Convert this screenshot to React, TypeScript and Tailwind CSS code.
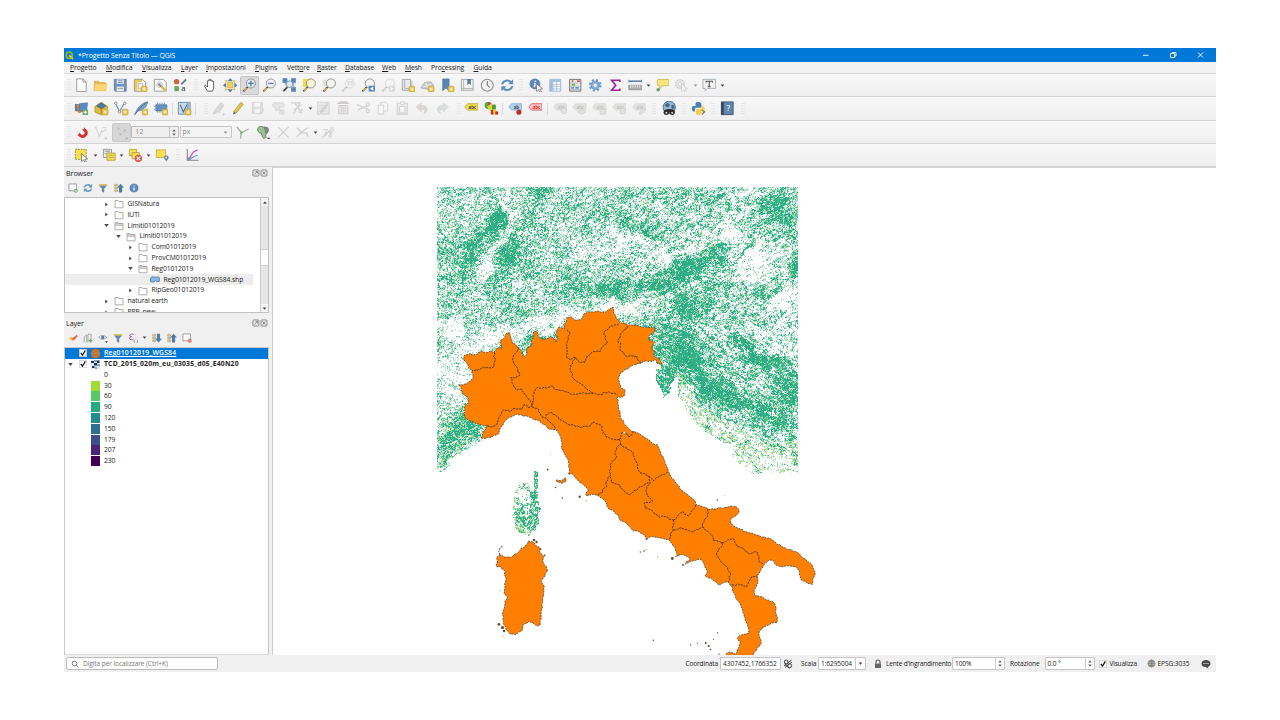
import React, { useMemo } from "react";

type Pt = [number, number];
type Kids = { children?: React.ReactNode };

/* ---------- noise helpers ---------- */

function hash(x: number, y: number, s: number): number {
  let h = (Math.imul(x, 374761393) + Math.imul(y, 668265263) + Math.imul(s, 1442695041)) | 0;
  h = Math.imul(h ^ (h >>> 13), 1274126177);
  h = Math.imul(h ^ (h >>> 16), 2246822519);
  return ((h ^ (h >>> 15)) >>> 0) / 4294967296;
}

function noise(x: number, y: number, s: number): number {
  const xi = Math.floor(x);
  const yi = Math.floor(y);
  const fx = x - xi;
  const fy = y - yi;
  const u = fx * fx * (3 - 2 * fx);
  const v = fy * fy * (3 - 2 * fy);
  const a = hash(xi, yi, s) * (1 - u) + hash(xi + 1, yi, s) * u;
  const b = hash(xi, yi + 1, s) * (1 - u) + hash(xi + 1, yi + 1, s) * u;
  return a * (1 - v) + b * v;
}

function inside(poly: Pt[], x: number, y: number): boolean {
  let r = false;
  for (let i = 0, j = poly.length - 1; i < poly.length; j = i++) {
    const [xi, yi] = poly[i];
    const [xj, yj] = poly[j];
    if (yi > y !== yj > y && x < ((xj - xi) * (y - yi)) / (yj - yi) + xi) r = !r;
  }
  return r;
}

/* ---------- vector geometry, in thirds of a map unit from a local origin ---------- */

function pts(ox: number, oy: number, s: string): Pt[] {
  return s.trim().split(/\s+/).map((p) => {
    const [x, y] = p.split(",").map(Number);
    return [ox + x / 3, oy + y / 3] as Pt;
  });
}

function rough(p: Pt[], closed: boolean): string {
  let d = `M${p[0][0].toFixed(1)} ${p[0][1].toFixed(1)}`;
  const n = closed ? p.length : p.length - 1;
  const amp = closed ? 1.5 : 2;
  for (let i = 0; i < n; i++) {
    const a = p[i];
    const b = p[(i + 1) % p.length];
    const len = Math.hypot(b[0] - a[0], b[1] - a[1]);
    const steps = Math.max(1, Math.round(len / 2.1));
    for (let k = 1; k <= steps; k++) {
      const t = k / steps;
      const j = k === steps ? 0 : amp;
      const x = a[0] + (b[0] - a[0]) * t + (hash(i, k, 5) - 0.5) * j;
      const y = a[1] + (b[1] - a[1]) * t + (hash(i, k, 6) - 0.5) * j;
      d += `L${x.toFixed(1)} ${y.toFixed(1)}`;
    }
  }
  return closed ? d + "Z" : d;
}

const N = (s: string) => pts(450, 300, s);
const S = (s: string) => pts(620, 420, s);
const W = (s: string) => pts(480, 460, s);

const mainland: Pt[] = [
  ...N("93,414 97,402 106,389 112,377 95,375 78,372 60,362 45,352 41,340 46,325 42,322 55,308 56,292 45,287 36,280 33,262 25,254 45,252 60,245 70,236 66,212 56,205 50,188 41,180 42,168 62,160 66,166 80,163 95,154 108,158 120,153 133,157 140,146 155,144 152,120 160,116 172,98 180,99 182,112 186,128 200,138 208,146 214,152 217,166 227,172 231,160 230,148 245,137 244,122 250,110 251,96 262,95 264,108 276,118 290,117 303,111 313,118 319,126 322,115 316,104 326,84 328,80 340,86 345,84 342,74 350,60 350,52 362,50 374,60 392,60 400,45 412,38 440,34 462,38 478,28 490,22 492,35 490,40 498,52 505,60 508,66 530,74 560,77 590,82 600,82 616,84 615,95 596,108 595,118 606,124 614,125 605,140 606,150 613,152 611,166 614,172 627,176 636,188 633,194 622,190 615,178 608,184 585,183 570,190 550,194 538,202 512,218 506,232 508,250 512,262 526,272 522,288 512,292 503,290 503,310 510,340 514,358 535,384 545,394 570,402 590,416 602,426 615,434 622,434 633,458 645,488 656,516 664,532 675,545"),
  ...S("180,206 200,222 222,240 228,254 258,262 264,268 290,266 320,262 345,258 356,268 355,280 338,292 331,300 338,316 360,327 385,338 415,346 445,354 468,368 490,382 515,390 533,398 545,410 565,425 578,440 585,455 582,470 578,478 577,493 560,488 544,480 541,470 538,450 525,440 510,438 490,440 465,433 462,424 447,420 432,434 420,455 412,470 413,490 402,510 406,528 425,530 440,540 462,548 467,560 466,575 472,600 470,608 455,609 435,620 418,632 416,642 420,655 424,668 412,682 395,712 345,712 350,698 358,680 362,665 352,655 365,645 385,640 386,626 375,600 372,590 368,570 360,550 346,532 335,498 325,486 318,486 298,495 280,480 255,468 262,455 255,442 245,420 240,418 210,424 196,432 210,418 205,410 190,402 172,408 170,398 160,378 145,358 125,355 110,352 90,350 78,360 72,345 58,335 42,334 20,312 0,300"),
  ...W("415,165 385,145 370,118 350,105 335,102 320,108 318,98 325,90 305,70 287,55 280,43 264,42 268,25 265,0"),
  ...N("348,470 335,445 333,415 328,402 316,388 300,388 290,380 270,365 240,352 215,345 200,342 178,352 160,370 148,392 145,402 120,412"),
];

const sardinia = W("145,243 155,245 165,252 178,262 180,278 190,290 188,302 203,332 190,352 183,362 193,380 188,420 184,450 180,495 172,498 160,490 145,485 130,492 126,512 108,524 90,522 78,508 70,490 68,458 75,430 83,410 74,402 74,385 78,355 72,330 62,320 50,320 52,290 60,285 75,292 92,292 112,280 135,258 143,250");

const borders: Pt[][] = [
  N("133,157 130,170 136,180 132,200 115,203 100,203 90,208 66,212"),
  N("204,142 200,155 190,170 190,185 200,200 203,215 210,225 195,235 182,233 190,255 200,270 215,268 230,290 243,305 245,320"),
  N("112,377 130,380 142,372 148,350 160,330 180,335 195,325 215,328 222,314 240,322 245,318"),
  N("245,316 250,300 252,275 262,262 290,264 305,258 312,266 345,275 365,284 400,278 430,280 450,283 475,275 503,285"),
  N("350,90 360,98 352,125 352,150 350,172 360,180 378,172 362,195 362,215 370,235 400,258 428,278"),
  N("378,175 390,188 405,187 412,168 430,155 450,155 455,142 472,130 465,115 462,95 480,80 495,74 508,70"),
  N("532,78 520,92 503,120 512,130 510,150 530,170 560,168 570,190"),
  N("245,320 262,325 272,345 290,355 310,375 316,388"),
  N("286,345 300,337 325,352 350,370 390,382 420,378 432,366 455,378 458,400 475,412 500,420 508,418"),
  N("508,418 515,398 530,400 540,410 550,395"),
  N("508,418 510,432 495,455 500,470 480,495 482,525 468,545 470,560 450,580 440,585"),
  N("510,432 525,443 550,458 562,500 570,518 595,528 600,545"),
  N("480,530 485,548 510,556 520,570 537,584 560,570 595,545"),
  N("595,528 612,542 620,532 656,516"),
  S("90,185 80,200 80,220 98,243 72,250 75,264 100,275 118,292 135,290 160,300"),
  S("160,300 175,285 190,275 205,288 218,270 228,254"),
  S("160,300 160,330 145,358"),
  S("160,330 180,324 215,335 248,322"),
  S("262,268 262,290 248,310 250,322 275,345 280,362 305,368"),
  S("305,368 305,380 290,398 300,420 315,435 332,460 325,486"),
  S("305,368 340,356 350,375 370,385 388,402 408,395 417,410 418,425 430,434"),
  S("335,494 360,495 380,500 390,480 395,470 412,470"),
];

const islets: [number, number, number][] = [
  [547.7, 469.5, 0.9], [555.5, 487.5, 0.8], [562.3, 498, 0.8], [579.7, 496.7, 1.2], [586.2, 500.7, 0.5],
  [550.3, 454, 0.4], [640.3, 552, 0.7], [644, 551, 0.8], [646, 549.5, 0.5], [657.7, 557, 0.5],
  [717.3, 500, 0.8], [724.3, 495.7, 0.4], [672.3, 558.5, 1.4], [676, 556.5, 0.7], [683, 565, 0.9],
  [653.3, 640.3, 0.8], [690.7, 645, 0.7], [697.5, 643.3, 0.6], [705.7, 643, 1], [708.7, 646, 1.1], [710.5, 649.5, 0.8],
  [713.5, 639.5, 0.6], [717.5, 633, 0.7], [719, 654, 0.7], [499, 624.3, 1.4], [502.5, 627.5, 1.6], [504, 631, 1.2],
  [534, 540, 1.3], [536.5, 542, 1.2], [540.5, 549, 0.9], [544.5, 555.5, 0.9], [500.5, 590.5, 0.4], [503, 635.5, 0.4],
];

/* ---------- forest-density raster ---------- */

const westSea = pts(430, 180, "15,875 50,862 55,850 80,820 110,805 140,785 158,772 240,640 600,640 600,1000 15,1000");
const adriatic = pts(610, 180, "0,560 130,540 157,560 135,568 142,610 162,648 176,636 184,605 198,588 205,640 225,690 262,735 330,782 365,800 372,840 400,868 440,882 470,870 500,876 565,884 565,1000 0,1000");
const channels = pts(610, 180, "190,585 205,580 235,600 250,625 265,670 300,700 370,730 440,770 500,820 565,860 565,890 380,890 360,790 270,745 215,690");

type Blob = [number, number, number, number, number, number];
const blobs: Blob[] = [
  [496, 221, 5, 15, 32, 0.75], [470, 258, 10, 20, 28, 0.5], [507, 199, 6, 22, 12, -0.4], [489, 262, 5, 24, 18, -0.35],
  [508, 252, 7, 22, 20, 0.5], [536, 199, 6, 16, 35, 0.4], [568, 236, 8, 5, 0, -0.2], [535, 290, 28, 5, 25, -0.25],
  [600, 288, 38, 6, -6, 0.35], [560, 320, 75, 8, -14, -0.45], [480, 345, 40, 10, -20, -0.28], [455, 330, 14, 8, 0, -0.45],
  [452, 372, 12, 10, 0, -0.45], [452, 394, 14, 9, 0, -0.45], [468, 375, 10, 18, 0, -0.3], [620, 310, 22, 7, 10, -0.4],
  [527, 340, 11, 12, 0, 0.4], [450, 440, 14, 22, 30, 0.3], [470, 428, 18, 8, -15, 0.25], [640, 228, 26, 7, 32, 0.4],
  [625, 237, 34, 6, 22, -0.35], [598, 250, 30, 12, 0, -0.12], [690, 266, 42, 8, -22, 0.5], [718, 258, 5, 10, 0, 0.4],
  [640, 289, 40, 7, -8, 0.24], [690, 306, 30, 13, -25, 0.32], [680, 250, 34, 4, -14, -0.3], [741, 200, 8, 16, 25, -0.35],
  [722, 233, 18, 6, -25, -0.4], [757, 258, 24, 22, 0, -0.48], [782, 300, 26, 15, -25, -0.42], [760, 215, 18, 6, -30, 0.1],
  [783, 218, 14, 18, 0, 0.35], [772, 200, 26, 8, -30, 0.25], [746, 246, 2, 12, 25, 0.8], [797, 265, 7, 10, 0, 0.5],
  [768, 290, 14, 5, -30, 0.45], [790, 350, 14, 18, 0, -0.3], [735, 330, 45, 6, 0, -0.1], [682, 348, 34, 17, 22, 0.4],
  [760, 358, 32, 7, 28, 0.55], [703, 385, 12, 30, -38, 0.4], [745, 404, 48, 11, 28, 0.42], [788, 392, 16, 20, 0, 0.4],
  [725, 352, 24, 10, 0, -0.1], [664, 382, 10, 16, 0, 0.3], [770, 385, 18, 6, 30, -0.12], [780, 450, 26, 12, 22, -0.05],
  [735, 335, 8, 30, -60, 0.15],
];

const inks = ["#2cae86", "#3ab583", "#5cc28d", "#8ed3b8", "#c3e8da", "#a3dc7c", "#239a86"];

function buildRaster(): string[] {
  const out = inks.map(() => "");
  const put = (i: number, x: number, y: number) => {
    out[i] += `M${x} ${y}h1`;
  };
  const field = blobs.map(([cx, cy, rx, ry, a, w]) => {
    const t = (a * Math.PI) / 180;
    return { cx, cy, rx, ry, w, c: Math.cos(t), s: Math.sin(t) };
  });
  for (let y = 187; y < 474; y++) {
    for (let x = 437; x < 798; x++) {
      const wx = x + (noise(x / 4, y / 4, 91) - 0.5) * 7;
      const wy = y + (noise(x / 4, y / 4, 92) - 0.5) * 7;
      if (inside(westSea, wx, wy)) continue;
      if (inside(adriatic, x + (wx - x) * 0.5, y + (wy - y) * 0.5)) continue;
      let d = 0.51;
      const bx = x + (noise(x / 9, y / 9, 11) - 0.5) * 14;
      const by = y + (noise(x / 9, y / 9, 12) - 0.5) * 14;
      for (const b of field) {
        const dx = bx - b.cx;
        const dy = by - b.cy;
        const u = (dx * b.c + dy * b.s) / b.rx;
        const v = (-dx * b.s + dy * b.c) / b.ry;
        const q = u * u + v * v;
        if (q < 5) d += b.w * Math.exp(-q);
      }
      const ang = x > 640 && y > 320 ? 0.6 : -0.55;
      const ru = x * Math.cos(ang) + y * Math.sin(ang);
      const rv = -x * Math.sin(ang) + y * Math.cos(ang);
      const calm = x > 640 ? 0.6 : 0.36;
      const streak = noise(ru / 5, rv / 1.8, 21) - 0.5;
      const patch = noise(x / 12, y / 12, 22) - 0.5;
      const fine = noise(x / 1.5, y / 1.5, 23) - 0.5;
      let sea = false;
      if (inside(channels, x, y)) {
        sea = true;
        d -= 0.2;
      }
      const p = d + streak * calm + patch * 0.22 + fine * 0.7 + (hash(x, y, 31) - 0.5) * 0.6;
      const k = hash(x, y, 41);
      const lime = sea || (y > 440 && x > 740) ? 0.35 : y > 400 && x < 480 ? 0.16 : 0.05;
      if (p > 0.8) put(k < lime * 0.4 ? 5 : k < 0.68 ? 0 : k < 0.92 ? 1 : 6, x, y);
      else if (p > 0.63) put(k < lime ? 5 : k < 0.22 ? 1 : k < 0.55 ? 2 : 3, x, y);
      else if (p > 0.38) put(k < lime ? 5 : k < 0.36 ? 3 : 4, x, y);
    }
  }
  for (let y = 471; y < 537; y++) {
    for (let x = 509; x < 542; x++) {
      const cx = 525.5 + (y - 510) * 0.02;
      const body = ((x - cx) / 13.5) ** 2 + ((y - 509) / 26) ** 2;
      const cape = x > 533 && x < 538 && y < 498;
      if (body > 1 + (noise(x / 3, y / 3, 51) - 0.5) * 0.5 && !cape) continue;
      const low = ((x - 522) / 8) ** 2 + ((y - 496) / 7) ** 2 < 1 ? -0.22 : 0;
      const east = x > 529 ? 0.15 : y > 506 ? 0.1 : -0.02;
      const p = 0.55 + low + east + (noise(x / 2.2, y / 2.2, 52) - 0.5) * 0.8 + (hash(x, y, 53) - 0.5) * 0.6;
      const k = hash(x, y, 54);
      const edge = body > 0.65 && x < 532 ? 0.5 : 0.12;
      if (p > 0.72) put(k < edge ? 5 : k < 0.75 ? 0 : 2, x, y);
      else if (p > 0.46) put(k < edge ? 5 : k < 0.5 ? 2 : 4, x, y);
    }
  }
  return out;
}

function MapCanvas() {
  const raster = useMemo(buildRaster, []);
  const land = useMemo(() => rough(mainland, true), []);
  const isle = useMemo(() => rough(sardinia, true), []);
  const lines = useMemo(() => borders.map((b) => rough(b, false)), []);
  return (
    <svg className="block h-[487px] w-[943px]" viewBox="273 168 943 487">
      <g shapeRendering="crispEdges" fill="none" transform="translate(0 .5)">
        {raster.map((d, i) => (
          <path key={i} d={d} stroke={inks[i]} strokeWidth="1" />
        ))}
      </g>
      <g fill="#ff8000" stroke="#4d463e" strokeWidth=".85" strokeDasharray="2 .9">
        <path d={land} />
        <path d={isle} />
        <path d="M556 480l5.500.7 4-3 .5 3.500-4 2-5-1.500zM726 654l3-2 4 1 2 1v3h-10z" />
        <path d="M500 555l-1.300-3.500 1.700-4 2.300-1.500" fill="none" strokeWidth="1" />
      </g>
      <g fill="none" stroke="#3f3524" strokeWidth=".95" strokeDasharray="2.300 .9">
        {lines.map((d, i) => (
          <path key={i} d={d} />
        ))}
      </g>
      <g fill="#6b4a2c">
        {islets.map(([x, y, r], i) => (
          <circle key={i} cx={x} cy={y} r={r} />
        ))}
      </g>
      <circle cx="624.300" cy="432.500" r="1.300" fill="#d8f0ea" stroke="#555" strokeWidth=".4" />
    </svg>
  );
}

/* ---------- icon building blocks ---------- */

function Ic({ children, faded, small }: Kids & { faded?: boolean; small?: boolean }) {
  return (
    <svg
      viewBox="0 0 16 16"
      className={(small ? "h-[10px] w-[10px]" : "h-[14.500px] w-[14.500px]") + " block shrink-0" + (faded ? " opacity-[.27] grayscale-[.6]" : " opacity-90")}
      fill="none"
    >
      {children}
    </svg>
  );
}

const Slot = ({ children }: Kids) => <div className="flex w-[19.8px] shrink-0 items-center justify-center">{children}</div>;

const Grip = () => (
  <svg viewBox="0 0 4 14" className="h-[14px] w-[4px] shrink-0" fill="#dadada">
    {[1, 3.5, 6, 8.5, 11].map((y) => (
      <path key={y} d={`M.4 ${y}h1.100v1.100h-1.100zM2.500 ${y}h1.100v1.100h-1.100z`} />
    ))}
  </svg>
);

const Rule = () => <div className="h-[12px] w-px shrink-0 bg-[#d8d8d8]" />;

const Caret = ({ pale }: { pale?: boolean }) => (
  <svg viewBox="0 0 6 4" className="h-[3px] w-[5px] shrink-0" fill={pale ? "#999" : "#444"}>
    <path d="M.5.500h5l-2.500 3z" />
  </svg>
);

const Star = () => (
  <g>
    <rect x="9" y="9" width="6.500" height="6.500" rx="1.200" fill="#dcb83a" stroke="#b99a25" strokeWidth=".6" />
    <path d="M12.250 10v4.500M10 12.250h4.500M10.700 10.700l3.100 3.100M13.800 10.700l-3.100 3.100" stroke="#fff7c4" strokeWidth=".7" />
  </g>
);

const Plus = () => (
  <g>
    <rect x="9.500" y="9.500" width="6" height="6" rx="1" fill="#5f9b5c" />
    <path d="M12.500 10.500v4M10.500 12.500h4" stroke="#fff" strokeWidth="1.200" />
  </g>
);

const Lens = ({ fill = "#f6f6f4" }: { fill?: string }) => (
  <g>
    <path d="M6.400 9.800L1.500 14.700" stroke="#3b3b3b" strokeWidth="2" />
    <path d="M5.300 10.900l-3 3" stroke="#e4b640" strokeWidth="1.500" />
    <circle cx="9.800" cy="6" r="5" fill={fill} stroke="#7d8284" strokeWidth="1" />
  </g>
);

const TagShape = ({ fill, stroke, text }: { fill: string; stroke: string; text: string }) => (
  <g>
    <path d="M4 3h11.500v7h-11.500L.8 6.500z" fill={fill} stroke={stroke} strokeWidth=".9" />
    <text x="9.300" y="8.300" textAnchor="middle" fontFamily="Open Sans, sans-serif" fontWeight="700" fontSize="5" fill={stroke === "#e03a3a" ? "#d11" : "#333"}>
      {text}
    </text>
  </g>
);

const Folder = ({ open }: { open?: boolean }) => (
  <svg viewBox="0 0 10 10" className="h-[10px] w-[10px] shrink-0" fill="#fff" stroke="#9a9a9a" strokeWidth=".8">
    <path d="M1 8.800V1.500h3l.8 1H9v6.300z" />
    {open && <path d="M1 4.200h8M1.500 2.800h7" fill="none" />}
  </svg>
);

const Refresh = () => (
  <g stroke="#4a83bf" strokeWidth="2.300">
    <path d="M2.500 7A5.500 5 0 0 1 12 4.500" />
    <path d="M13.500 9A5.500 5 0 0 1 4 11.500" />
    <path d="M14.500 1.500v5.500H9zM1.500 14.500V9H7z" fill="#4a83bf" stroke="none" />
  </g>
);

const Funnel = () => (
  <g>
    <path d="M2 4h12L9.500 9v6l-3-1.500V9z" fill="#5a7fa8" stroke="#3d6087" strokeWidth=".6" />
    <path d="M1.500 1.500h13v2.500h-13z" fill="#e0bf45" />
  </g>
);

const Info = () => (
  <g>
    <circle cx="8" cy="8" r="6.500" fill="#4a82bd" stroke="#2f6299" strokeWidth=".8" />
    <path d="M8 7v5M8 3.800v1.700" stroke="#fff" strokeWidth="2" />
  </g>
);

const Pencil = ({ c = "#e8c42e" }: { c?: string }) => (
  <g>
    <path d="M3 11.500L11 1.500l2.500 2L5.500 13.500z" fill={c} stroke="#8a7521" strokeWidth=".7" />
    <path d="M3 11.500l2.500 2-3.300 1.500z" fill="#555" />
  </g>
);

const Arrow = () => <path d="M8 6l7 6-3 .2 1.700 3-1.500.7-1.600-3-2.100 2z" fill="#fff" stroke="#555" strokeWidth=".8" />;

/* ---------- toolbars ---------- */

const bar = "flex items-center shrink-0 border-b border-[#d3d3d3] bg-gradient-to-b from-[#f8f8f8] to-[#efefef]";

function ProjectBar() {
  return (
    <div className={bar + " h-[23px] pl-[3px]"}>
      <Grip />
      <Slot><Ic><path d="M3 1h7L13.500 4.500v10.500H3z" fill="#fff" stroke="#8c8c8c" /><path d="M10 1V4.500h3.500" stroke="#8c8c8c" /></Ic></Slot>
      <Slot><Ic><path d="M1 3h5l1.500 1.500H14V14H1z" fill="#e0b249" /><path d="M2.500 6.500H15.500L14 14H1z" fill="#fbd266" stroke="#e3b44d" strokeWidth=".6" /></Ic></Slot>
      <Slot><Ic><path d="M1.500 1.500h13v13h-12l-1-1z" fill="#5f8ab8" stroke="#4d6f96" /><path d="M4 1.500h8v5H4z" fill="#cfe0f0" /><path d="M4 9.500h8v5H4z" fill="#e8e8e8" /><path d="M5.500 3h5M5.500 5h5M5 11.500h6" stroke="#777" strokeWidth=".8" /></Ic></Slot>
      <Slot><Ic><path d="M1.500 1.500h9L14 5v9.500H1.500z" fill="#fff" stroke="#777" /><path d="M2 2h3v12H2zM2 2h8v2.500H2z" fill="#ecc544" /><path d="M6 6h5v6H6z" fill="#f5f5f5" stroke="#888" strokeWidth=".6" /><Star /></Ic></Slot>
      <Slot><Ic><path d="M1.500 1.500h10L14.500 5v9.500h-13z" fill="#fff" stroke="#888" /><path d="M3 8l4-5 4 4-4 4z" fill="#dfe7ee" stroke="#999" strokeWidth=".6" /><path d="M6 6.500l7.500 7" stroke="#777" strokeWidth="2.200" /><path d="M9 9.300l5 5" stroke="#e3c03a" strokeWidth="2.200" /></Ic></Slot>
      <Slot><Ic><circle cx="4" cy="4" r="3" fill="#c4552d" /><path d="M1.500 9h5v5.500h-5z" fill="#5d9b5a" /><path d="M9 7l5.500-5.500" stroke="#4c6f92" strokeWidth="2" /><text x="9" y="14.500" fontFamily="Open Sans, sans-serif" fontWeight="600" fontSize="8.500" fill="#444">a</text></Ic></Slot>
      <div className="flex w-[10.300px] shrink-0 justify-center pl-[2px]"><Grip /></div>
      <Slot><Ic><path d="M5 14.500L2 9.500c-.8-1.500.8-2 1.500-1L5 10V3.500c0-1.300 1.600-1.300 1.600 0V2.200c0-1.300 1.700-1.300 1.700 0v.8c0-1.200 1.700-1.200 1.700 0v1.200c0-1.200 1.700-1.200 1.700 0V11l-1.200 3.500z" fill="#fff" stroke="#333" strokeWidth=".9" /></Ic></Slot>
      <Slot><Ic><path d="M5 5h6v6H5z" fill="#f2cf3d" stroke="#b9971c" strokeWidth=".6" /><path d="M8 0l3 3.500H5zM8 16l3-3.500H5zM0 8l3.500-3v6zM16 8l-3.500-3v6z" fill="#4470a3" /><path d="M2 2l3.500 1L3 5.500zM14 2l-3.500 1L13 5.500zM2 14l1-3.500L5.500 13zM14 14l-1-3.500-2.500 2.500z" fill="#e6c233" /></Ic></Slot>
      <Slot>
        <div className="flex h-[19px] w-[19px] shrink-0 items-center justify-center rounded-[2px] border border-[#c3c3c3] bg-[#dadada]">
          <Ic><Lens fill="#e6edf4" /><path d="M9.800 3v6M6.800 6h6" stroke="#3f6da3" strokeWidth="1.500" /></Ic>
        </div>
      </Slot>
      <Slot><Ic><Lens /><path d="M7 6h5.600" stroke="#3f6da3" strokeWidth="1.500" /></Ic></Slot>
      <Slot><Ic><path d="M1 .500h4.500v4.500H1zM10.500.500H15v4.500h-4.500zM10.500 10.500H15V15h-4.500zM3 5l2 4M13 5v6" fill="#4a7ab0" stroke="#4a7ab0" strokeWidth=".8" /><path d="M6 10l-4.500 4.500" stroke="#333" strokeWidth="2" /><circle cx="8.300" cy="6.800" r="3.600" fill="#dfe9f2" stroke="#6d8296" /></Ic></Slot>
      <Slot><Ic><path d="M1 1h7v9H1z" fill="#f2dc3c" /><Lens fill="#f8f4cf" /></Ic></Slot>
      <Slot><Ic><path d="M1 2h7v7H1z" fill="#ddd" /><Lens fill="#f2f2ee" /></Ic></Slot>
      <Slot><Ic faded><Lens /><text x="9.800" y="8" textAnchor="middle" fontFamily="Open Sans, sans-serif" fontWeight="700" fontSize="5" fill="#333">1:1</text></Ic></Slot>
      <Slot><Ic><Lens /><path d="M8.500 8.500h7v6.500h-7z" fill="#4a7fb8" /><path d="M13.500 9.500v4.500L10 11.750z" fill="#fff" /></Ic></Slot>
      <Slot><Ic faded><Lens /><path d="M8.500 8.500h7v6.500h-7z" fill="#999" /><path d="M10.500 9.500v4.500l3.500-2.250z" fill="#fff" /></Ic></Slot>
      <Slot><Ic><path d="M1.500 1.500h9v12h-9z" fill="#e9e9e9" stroke="#999" /><path d="M4 1.500v10h8V3" stroke="#aaa" /><Star /></Ic></Slot>
      <Slot><Ic><path d="M1 11l4-6 7-1 3 4-3 5z" fill="#c9c9c9" stroke="#999" strokeWidth=".8" /><path d="M3 10l9-3M6 5l4 7" stroke="#f4f4f4" strokeWidth=".8" /><Star /></Ic></Slot>
      <Slot><Ic><path d="M3 1h7v13l-3.500-3L3 14z" fill="#4a7ab0" stroke="#34618f" strokeWidth=".7" /><Star /></Ic></Slot>
      <Slot><Ic><path d="M1.500 1.500h13v12h-13z" fill="#f4f4f4" stroke="#999" /><path d="M4 1.500v12M1.500 11.500h13" stroke="#aaa" /><path d="M8 1h4v7l-2-2-2 2z" fill="#4a6f98" /></Ic></Slot>
      <Slot><Ic><circle cx="8" cy="8" r="6.600" fill="#f5f5f5" stroke="#868686" strokeWidth="1.200" /><path d="M8 3.500V8l3 2.500" stroke="#555" strokeWidth="1.100" /></Ic></Slot>
      <Slot><Ic><Refresh /></Ic></Slot>
      <div className="flex w-[9.200px] shrink-0 justify-center"><Grip /></div>
      <Slot><Ic><circle cx="6.500" cy="6.500" r="5.500" fill="#4a82bd" stroke="#2f6299" strokeWidth=".7" /><path d="M6.800 5.500L6 10M7.200 2.800l-.2 1.500" stroke="#fff" strokeWidth="1.700" /><Arrow /></Ic></Slot>
      <Slot><Ic><path d="M2 1.500h12v13H2z" fill="#fff" stroke="#8aa9ca" /><path d="M2 1.500h12v3H2zM2 4.500h3v10H2z" fill="#9dbcdb" /><path d="M2 7h12M2 9.500h12M2 12h12M5.500 4v10M9.500 4v10" stroke="#8aa9ca" strokeWidth=".8" /></Ic></Slot>
      <Slot><Ic><path d="M1.800 1.500h12.400v13H1.800z" fill="#f3f3f3" stroke="#666" strokeWidth="1.100" /><path d="M2 5.500h12M2 9h12M2 12.500h12" stroke="#777" strokeWidth=".6" /><path d="M4 3.500h2M10 3.500h3" stroke="#c94a4a" strokeWidth="2" /><path d="M4 7.300h4" stroke="#5aa55a" strokeWidth="2" /><path d="M3.500 11h3M8 11h4" stroke="#5a8cc0" strokeWidth="1.900" /></Ic></Slot>
      <Slot><Ic><circle cx="8" cy="8" r="4.500" fill="#7ea9d6" stroke="#4f82ba" /><circle cx="8" cy="8" r="5.700" stroke="#5f90c6" strokeWidth="2.600" strokeDasharray="2.300 2.200" /><circle cx="8" cy="8" r="1.800" fill="#e8f0f8" /></Ic></Slot>
      <Slot><Ic><path d="M13 4.500V2.500H4l4.500 5.500L4 13.500h9v-2" stroke="#940a94" strokeWidth="1.800" /></Ic></Slot>
      <Slot><Ic><path d="M1 3.500h14" stroke="#3d6b9c" strokeWidth="1.600" /><path d="M1 2v3M15 2v3" stroke="#3d6b9c" /><path d="M.8 8h14.400v5H.8z" fill="#a5a5a5" stroke="#777" strokeWidth=".7" /><path d="M3 8v2.500M5.500 8v2.500M8 8v2.500M10.500 8v2.500M13 8v2.500" stroke="#fff" strokeWidth=".9" /></Ic></Slot>
      <div className="flex w-[7.100px] shrink-0 justify-center"><Caret /></div>
      <Slot><Ic><path d="M4 1.500h10c1 0 1.500.5 1.500 1.500v4c0 1-.5 1.500-1.500 1.500H8L4.500 13l.5-4.500H4c-1 0-1.500-.5-1.500-1.500V3c0-1 .5-1.500 1.500-1.500z" fill="#f7e56f" stroke="#b9a63a" strokeWidth=".8" /><circle cx="3.500" cy="13" r="2" fill="#5d9b5a" /></Ic></Slot>
      <Slot><Ic faded><circle cx="6.500" cy="6.500" r="4.700" fill="#bbb" stroke="#777" strokeWidth="1.500" strokeDasharray="2 1" /><circle cx="6.500" cy="6.500" r="2" fill="#fff" stroke="#888" /><Arrow /></Ic></Slot>
      <div className="flex w-[7.500px] shrink-0 justify-center"><Caret pale /></div>
      <Slot><Ic><path d="M1 1.500h14v10H6L3.500 14v-2.500H1z" fill="#f1f1f1" stroke="#9ca5ad" /><path d="M4.500 5V3.500h7V5M8 3.500v6M6.500 9.500h3" stroke="#444" strokeWidth="1.200" /></Ic></Slot>
      <div className="flex w-[7px] shrink-0 justify-center"><Caret /></div>
    </div>
  );
}

function EditBar() {
  return (
    <div className={bar + " h-[24px] pl-[3px]"}>
      <Grip />
      <div className="w-[.8px] shrink-0" />
      <Slot><Ic><path d="M1 3l7 1-1 8-6-1z" fill="#4f6f9a" /><path d="M2.500 4.500l8-2 1 9-6.500 2z" fill="#c3793e" /><path d="M6 3l9-1-1 8-8 1z" fill="#4a80bb" stroke="#2f5f92" strokeWidth=".6" /><Plus /></Ic></Slot>
      <Slot><Ic><path d="M1 6l7-4.500L15 6v6l-7 3.500L1 12z" fill="#e0b629" stroke="#94760f" strokeWidth=".7" /><path d="M3 5.500l5-3.500 5 3.500-5 3z" fill="#3d6fa6" stroke="#29496b" strokeWidth=".8" /><path d="M8 8.500v6" stroke="#94760f" /><Star /></Ic></Slot>
      <Slot><Ic><path d="M2 3l4 9L11 3" stroke="#5a7fa8" strokeWidth="1.200" /><circle cx="2" cy="2.500" r="1.300" fill="#fff" stroke="#666" strokeWidth=".8" /><circle cx="6" cy="12" r="1.400" fill="#fff" stroke="#666" strokeWidth=".8" /><circle cx="12" cy="2.500" r="1.300" fill="#fff" stroke="#666" strokeWidth=".8" /><Star /></Ic></Slot>
      <Slot><Ic><path d="M1 15C3 8 8 2 15 1c-1 6-6 10-11 10z" fill="#6b9bcc" stroke="#4d7096" strokeWidth=".8" /><path d="M1 15C5 9 9 5 15 1" stroke="#2e4d6e" strokeWidth=".8" /><Star /></Ic></Slot>
      <Slot><Ic><path d="M2 4h12v7H2z" fill="#5587bd" stroke="#345f8f" strokeWidth=".7" /><path d="M4 2v2M6.500 2v2M9 2v2M11.500 2v2M4 11v2M6.500 11v2" stroke="#7f9dbd" strokeWidth="1.200" /><path d="M0 6h2M0 9h2M14 6h2" stroke="#7f9dbd" /><Star /></Ic></Slot>
      <div className="flex w-[4px] shrink-0 justify-center"><Rule /></div>
      <Slot><Ic><path d="M1.500 1.500h13v13h-13z" fill="#c6d8ea" stroke="#5c7d9e" /><path d="M3.500 4l3.500 8 4-8" stroke="#3a5878" strokeWidth="1.200" /><path d="M12 2v8" stroke="#7f9fc0" strokeWidth="2" /><Star /></Ic></Slot>
      <div className="flex w-[2px] shrink-0 justify-center"><Rule /></div>
      <div className="flex w-[11px] shrink-0 justify-end"><Grip /></div>
      <div className="w-[1px] shrink-0" />
      <Slot><Ic faded><Pencil c="#999" /><path d="M8 13l6-9" stroke="#888" strokeWidth="2.200" /><path d="M12.500 14h3l-1.500 2z" fill="#333" /></Ic></Slot>
      <Slot><Ic><Pencil /></Ic></Slot>
      <Slot><Ic faded><path d="M1.500 1.500h11v12h-11z" fill="#aaa" stroke="#777" /><path d="M4 2h6v4H4zM4 9h6v4H4z" fill="#fff" /><path d="M8 15l5-7 2 1.500-5 6z" fill="#999" /></Ic></Slot>
      <Slot><Ic faded><path d="M4 2h8c4 0 4 5 0 5H9v3H5V7H4C1 7 1 2 4 2z" fill="#bbb" stroke="#888" /><rect x="9" y="9" width="6" height="6" fill="#aaa" /></Ic></Slot>
      <Slot><Ic faded><path d="M1 2h10L4 14M5 2l8 11M13 4l-9 6" stroke="#777" strokeWidth="1.300" /><path d="M9 12l4-4 2 2-4 4z" fill="#999" /></Ic></Slot>
      <div className="flex w-[6px] shrink-0 justify-center"><Caret /></div>
      <Slot><Ic faded><path d="M1.500 1.500h13v13h-13z" fill="#ccc" stroke="#777" /><path d="M3 5h9M3 8h9M3 11h7" stroke="#888" /><path d="M5 13L13 3" stroke="#666" strokeWidth="2" /></Ic></Slot>
      <Slot><Ic faded><path d="M1.500 2.500h13M4 1h8" stroke="#855" strokeWidth="1.600" /><path d="M3 5h10v9H3z" fill="#dcc" stroke="#866" strokeWidth="1.200" /><path d="M6 6v7M8 6v7M10 6v7" stroke="#866" /></Ic></Slot>
      <Slot><Ic faded><path d="M1 4l12 5M2 10l12-5" stroke="#777" strokeWidth="1.600" /><circle cx="13" cy="3.500" r="1.800" stroke="#777" strokeWidth="1.200" /><circle cx="13" cy="11" r="1.800" stroke="#777" strokeWidth="1.200" /></Ic></Slot>
      <Slot><Ic faded><path d="M5 1.500h6l2 2V11H5z" fill="#fff" stroke="#777" /><path d="M2.500 4.500h6v10h-6z" fill="#fff" stroke="#777" /></Ic></Slot>
      <Slot><Ic faded><path d="M2.500 2.500h11v12h-11z" fill="#ddd" stroke="#777" strokeWidth="1.300" /><path d="M5 6h6v7H5zM6 1h4v3H6z" fill="#fff" stroke="#777" /></Ic></Slot>
      <Slot><Ic faded><path d="M1 6.500L7 2v3c5 0 7 2 6.500 5-.3 2-2 3.500-4 4 2-2.500 1.500-5-2.500-5V12z" fill="#b77" stroke="#866" strokeWidth=".5" /></Ic></Slot>
      <Slot><Ic faded><path d="M15 6.500L9 2v3C4 5 2 7 2.500 10c.3 2 2 3.500 4 4-2-2.500-1.500-5 2.500-5v3z" fill="#8a8" stroke="#676" strokeWidth=".5" /></Ic></Slot>
      <div className="flex w-[9px] shrink-0 justify-center pl-[4px]"><Grip /></div>
      <Slot><Ic><TagShape fill="#f4dc3a" stroke="#b39c20" text="abc" /></Ic></Slot>
      <Slot><Ic><circle cx="4.500" cy="5" r="3.800" fill="#2fa32f" /><path d="M4.500 1.200v4l4-1a4 4 0 0 0-4-3z" fill="#d22" /><path d="M3 6l4 5 4-5-3-3z" fill="#e6c820" /><path d="M9 4h4v6H9z" fill="#2f8f2f" /><path d="M7.500 10h3v5h-3z" fill="#c11" /><path d="M10.500 9h3v6h-3z" fill="#f0d020" /><path d="M12.500 11.500H16V15h-3.500z" fill="#c11" /></Ic></Slot>
      <div className="flex w-[4px] shrink-0 justify-center"><Rule /></div>
      <div className="w-[.6px] shrink-0" />
      <Slot><Ic><TagShape fill="#a9c9ea" stroke="#7fa5cc" text="ab" /><circle cx="12" cy="12.300" r="2.800" fill="#b11f1f" /></Ic></Slot>
      <Slot><Ic><TagShape fill="#fbc4c4" stroke="#e03a3a" text="abc" /></Ic></Slot>
      <div className="flex w-[5px] shrink-0 justify-center"><Rule /></div>
      {["M9 11a3 3 0 1 0 6 0a3 3 0 1 0-6 0", "M6 12q4.500-4 9 0q-4.500 4-9 0", "M9 9h6v5.500H9z", "M9 14v-3a3 3 0 0 1 6 0v3z", "M8 14.500l1-3L13 8l2 2-4 4z"].map((d) => (
        <Slot key={d}><Ic faded><TagShape fill="#b5b5a5" stroke="#8b8b7d" text="abc" /><path d={d} fill="#bbb" stroke="#666" strokeWidth=".8" /></Ic></Slot>
      ))}
      <div className="flex w-[10px] shrink-0 justify-center"><Grip /></div>
      <Slot><Ic><circle cx="8" cy="7" r="6.800" fill="#8caed0" stroke="#2f4963" strokeWidth=".9" /><path d="M3 4l3-2 3 2-2 3-3-1zM10 5l3-1 1 4-3 1z" fill="#35577c" /><circle cx="4.800" cy="12.500" r="3" fill="#111" /><circle cx="11.200" cy="12.500" r="3" fill="#111" /><path d="M5.500 9h5v3h-5z" fill="#111" /><circle cx="4.800" cy="13" r="1.100" fill="#ddd" /><circle cx="11.200" cy="13" r="1.100" fill="#ddd" /></Ic></Slot>
      <div className="flex w-[10px] shrink-0 justify-center"><Grip /></div>
      <Slot><Ic><path d="M8 1C5 1 5 2.500 5 4v1.500h4H3C1 5.500 1 7 1 8.500S2 11.500 3 11.500h1.500V9c0-1 .5-1.500 1.500-1.500h4c1 0 1.500-.5 1.500-1.500V4C11.500 2 10.500 1 8 1z" fill="#3a73a8" /><path d="M8 15.500c3 0 3.500-1 3.500-3V11h-4H13c2 0 2-1.500 2-2.500S14.500 5.500 13 5.500h-1V7c0 1.500-1 1.800-2 1.800H7c-1 0-1.500.7-1.500 1.700v2c0 2 .5 3 2.500 3z" fill="#f2ca3a" /><path d="M12 10l3 2-3 3" stroke="#776633" strokeWidth="1.300" /></Ic></Slot>
      <div className="flex w-[9px] shrink-0 justify-center"><Grip /></div>
      <Slot><Ic><path d="M1.500 1h13v14h-13z" fill="#4f7cae" stroke="#27435f" /><path d="M1.500 1H4v14H1.500z" fill="#22303e" /><text x="9.300" y="11.500" textAnchor="middle" fontFamily="Open Sans, sans-serif" fontWeight="600" fontSize="9.500" fill="#dfeaf5">?</text></Ic></Slot>
      <div className="flex w-[12px] shrink-0 justify-center"><Grip /></div>
    </div>
  );
}

const Steps = () => (
  <svg viewBox="0 0 6 10" className="h-[9px] w-[6px] shrink-0" fill="#666"><path d="M1 4l2-2.500L5 4zM1 6l2 2.500L5 6z" /></svg>
);

function SnapBar() {
  return (
    <div className={bar + " h-[23px] pl-[3px]"}>
      <Grip />
      <div className="w-[1px] shrink-0" />
      <Slot><Ic><path d="M9 3.500l2.800 3.300c2.200 3.200-2.500 7.400-5.500 5.200L3.200 9.300" stroke="#d11c1c" strokeWidth="3.300" /><path d="M8 4.300l1.900-1.700M2.200 10.500l1.900-2.300" stroke="#eee" strokeWidth="2.200" /></Ic></Slot>
      <Slot><Ic faded><path d="M2 3l4 9 3-6M9 3h5M8 8l6-3" stroke="#777" strokeWidth="1.300" /><circle cx="2" cy="3" r="1.500" fill="#999" /><circle cx="6" cy="12" r="1.500" fill="#999" /><path d="M11 14h4l-2 2z" fill="#333" /></Ic></Slot>
      <div className="flex h-[19px] w-[19px] shrink-0 items-center justify-center rounded-[2px] border border-[#cacaca] bg-[#d6d6d6]">
        <Ic faded><path d="M4 3h2v2H4zM11 5h2v2h-2zM6 9h2v2H6z" fill="#666" /><path d="M12 14h4l-2 2z" fill="#222" /></Ic>
      </div>
      <div className="flex h-[12px] w-[48px] shrink-0 items-center justify-between rounded-[1px] border border-[#bdbdbd] bg-[#efefef] pl-[4px] text-[#888]">
        <span className="pt-px">12</span>
        <div className="flex h-full w-[9px] items-center justify-center border-l border-[#c4c4c4]"><Steps /></div>
      </div>
      <div className="ml-[1px] flex h-[12px] w-[52px] shrink-0 items-center justify-between rounded-[1px] border border-[#c6c6c6] bg-[#f4f4f4] pr-[3px] pl-[2px] text-[#888]">
        px<Caret pale />
      </div>
      <div className="w-[1px]" />
      <Slot><Ic><path d="M2 2l5 6.500 8-4M7 8.500L6 15" stroke="#8fa98f" strokeWidth="1.300" /><circle cx="7" cy="8.500" r="1.500" fill="#6fae6f" /></Ic></Slot>
      <div className="w-[.8px]" />
      <Slot><Ic><path d="M2 4c1-3 5-3 7-1l3 3c2 2 0 4-1.500 4.500l.5 3c-1 2-4 1-4-1L6 9C3 9 1.500 7 2 4z" fill="#8cc084" stroke="#5d6a5d" strokeWidth="1.100" /><path d="M9 2l4 1c2 2 0 6-2 6z" fill="#7b857b" stroke="#555" strokeWidth=".7" /><path d="M12 14h4l-2 2z" fill="#222" /></Ic></Slot>
      <Slot><Ic faded><path d="M2 2l12 12M14 2L2 14" stroke="#777" strokeWidth="1.300" /></Ic></Slot>
      <Slot><Ic faded><path d="M2 13l5-5 7-5M2 3l5 5 6 1 1 4" stroke="#777" strokeWidth="1.500" /><circle cx="7" cy="8" r="1.800" fill="#888" /></Ic></Slot>
      <div className="flex w-[6px] shrink-0 justify-center"><Caret /></div>
      <Slot><Ic faded><path d="M2 5h5l-4 8 7-7v6l4-8" stroke="#777" strokeWidth="1.300" /><path d="M10 2h4v4h-4zM1 12h3v2H1zM8 11h4v3H8z" fill="#aaa" /></Ic></Slot>
    </div>
  );
}

function SelectBar() {
  return (
    <div className={bar + " h-[23px] pl-[3px]"}>
      <Grip />
      <div className="w-[.8px] shrink-0" />
      <Slot><Ic><path d="M1.500 1.500h12v11h-12z" fill="#f7df3e" stroke="#8a7d26" strokeDasharray="2 1" /><Arrow /></Ic></Slot>
      <div className="flex w-[7.500px] shrink-0 justify-center"><Caret /></div>
      <Slot><Ic><path d="M1.500 1.500h9v9h-9z" fill="#e9e9e9" stroke="#888" /><path d="M5.500 5.500h9v8h-9z" fill="#f7df3e" stroke="#a8983a" /><path d="M3 3.500h6M3 6h2" stroke="#777" strokeWidth=".9" /><path d="M7 8h6M7 10.500h6" stroke="#a8983a" strokeWidth=".8" /></Ic></Slot>
      <div className="flex w-[6px] shrink-0 justify-center"><Caret /></div>
      <Slot><Ic><path d="M1.500 1.500h8v7h-8z" fill="#f7df3e" stroke="#a08c1c" strokeWidth=".8" /><path d="M4.500 5h8v7h-8z" fill="#f7df3e" stroke="#a08c1c" strokeWidth=".8" /><circle cx="11.500" cy="11.500" r="4" fill="#d9443c" /><path d="M9.500 9.500l4 4M13.500 9.500l-4 4" stroke="#fff" strokeWidth="1.200" /></Ic></Slot>
      <div className="flex w-[7.500px] shrink-0 justify-center"><Caret /></div>
      <Slot><Ic><path d="M1.500 2h10v8.500h-10z" fill="#f7df3e" stroke="#b49d23" strokeWidth=".8" /><path d="M12.500 15l-2.200-3.500a2.400 2.400 0 1 1 4.400 0z" fill="#4d7cab" /><circle cx="12.500" cy="10.600" r="1" fill="#fff" /></Ic></Slot>
      <div className="flex w-[10px] shrink-0 justify-center pl-[2px]"><Grip /></div>
      <Slot><Ic><path d="M2.500 1v12.500H15" stroke="#777" strokeWidth="1.200" /><path d="M3 12c4 0 4-7 7-8l4-2" stroke="#c445b5" strokeWidth="1.400" /><path d="M3 13c5-1 5-4 11-5" stroke="#5487bd" strokeWidth="1.300" /></Ic></Slot>
    </div>
  );
}

/* ---------- docks ---------- */

function DockTitle({ name }: { name: string }) {
  return (
    <div className="flex h-[12px] shrink-0 items-center justify-between pr-[1px] pl-[2px] text-[7.200px]">
      <span className="pt-[2px]">{name}</span>
      <svg viewBox="0 0 16 8" className="h-[8px] w-[16px]" fill="#e6e6e6" stroke="#777" strokeWidth=".8">
        <rect x=".9" y=".9" width="6" height="6.200" rx="1" />
        <rect x="9" y=".9" width="6" height="6.200" rx="1" />
        <path d="M2.500 5.500l2.800-3M3.500 2.300h2v2M10.500 2.500l3 3M13.500 2.500l-3 3" />
      </svg>
    </div>
  );
}

const Twist = ({ open }: { open?: boolean }) => (
  <svg viewBox="0 0 6 6" className="h-[5px] w-[5px] shrink-0" fill="#444">
    <path d={open ? "M.3 1.300h5.400L3 4.800z" : "M1.500.600v4.800l3-2.400z"} />
  </svg>
);

const tree: { pad: string; label: string; open?: boolean; file?: boolean }[] = [
  { pad: "pl-[39px]", label: "GISNatura" },
  { pad: "pl-[39px]", label: "IUTI" },
  { pad: "pl-[39px]", label: "Limiti01012019", open: true },
  { pad: "pl-[51px]", label: "Limiti01012019", open: true },
  { pad: "pl-[63px]", label: "Com01012019" },
  { pad: "pl-[63px]", label: "ProvCM01012019" },
  { pad: "pl-[63px]", label: "Reg01012019", open: true },
  { pad: "pl-[75px]", label: "Reg01012019_WGS84.shp", file: true },
  { pad: "pl-[63px]", label: "RipGeo01012019" },
  { pad: "pl-[39px]", label: "natural earth" },
  { pad: "pl-[39px]", label: "PPR_new" },
];

function BrowserDock() {
  return (
    <div className="flex h-[150px] shrink-0 flex-col">
      <DockTitle name="Browser" />
      <div className="flex h-[18px] shrink-0 items-center gap-[5.200px] pl-[4px]">
        <Ic small><path d="M1.500 1.500h12v11h-12z" fill="#fff" stroke="#777" strokeWidth="1.200" /><circle cx="12.500" cy="12.500" r="3.200" fill="#5fa05c" /><path d="M12.500 10.500v4M10.500 12.500h4" stroke="#fff" /></Ic>
        <Ic small><Refresh /></Ic>
        <Ic small><Funnel /></Ic>
        <Ic small><path d="M1 2h5v3H1zM1 6.500h5v3H1zM1 11h5v3H1z" fill="#e5bf3c" stroke="#999" strokeWidth=".8" /><path d="M10.500 1L16 7h-3v8H8V7H5z" fill="#3f6ea5" /></Ic>
        <Ic small><Info /></Ic>
      </div>
      <div className="flex h-[116px] shrink-0 overflow-hidden border border-[#c0c0c0] bg-white">
        <div className="flex grow flex-col overflow-hidden pt-[.8px]">
          {tree.map((r, i) => (
            <div key={i} className={"flex h-[10.800px] shrink-0 items-center " + r.pad + (r.file ? " mr-[7px] bg-[#ededed]" : "")}>
              <div className="flex w-[10px] shrink-0">{!r.file && <Twist open={r.open} />}</div>
              {r.file ? (
                <svg viewBox="0 0 10 10" className="h-[10px] w-[10px] shrink-0" fill="#8fb9e3" stroke="#41719f" strokeWidth=".8"><path d="M.8 2.800c1-1.500 3-.8 4-.6 1.500.2 3.500-.8 4.500.3v4H6.500L5.500 5.500 3.500 7H1C.3 6 .3 4 .8 2.800z" /></svg>
              ) : (
                <Folder open={r.open} />
              )}
              <span className="pt-[.6px] pl-[3.500px]">{r.label}</span>
            </div>
          ))}
        </div>
        <div className="flex w-[8px] shrink-0 flex-col items-center justify-between border-l border-[#c9c9c9] bg-[#e6e6e6]">
          <div className="flex h-[8px] w-full items-center justify-center bg-[#f6f6f6]"><svg viewBox="0 0 6 4" className="h-[3px] w-[4px]" fill="#555"><path d="M0 4h6L3 0z" /></svg></div>
          <div className="mt-[4px] h-[17px] w-full border-y border-[#cfcfcf] bg-white" />
          <div className="flex h-[8px] w-full items-center justify-center bg-[#f6f6f6]"><Caret /></div>
        </div>
      </div>
    </div>
  );
}

const Check = () => (
  <svg viewBox="0 0 8 8" className="h-[8px] w-[8px] shrink-0" fill="#fff" stroke="#c5c5c5" strokeWidth=".6">
    <rect x=".3" y=".3" width="7.400" height="7.400" />
    <path d="M1.800 3.800l1.700 2.400L6.300 1.400" fill="none" stroke="#111" strokeWidth="1.200" />
  </svg>
);

const legend = [
  ["0", "bg-white"],
  ["30", "bg-[#a5db36]"],
  ["60", "bg-[#58c765]"],
  ["90", "bg-[#25ab82]"],
  ["120", "bg-[#218e8d]"],
  ["150", "bg-[#2c6f8e]"],
  ["179", "bg-[#3d4e8a]"],
  ["207", "bg-[#482576]"],
  ["230", "bg-[#440154]"],
];

function LayerDock() {
  return (
    <div className="flex min-h-0 grow flex-col">
      <DockTitle name="Layer" />
      <div className="flex h-[17px] shrink-0 items-center pl-[4px]">
        <div className="mr-[5px]"><Ic small><path d="M1 8l6 5 3-4-4-3z" fill="#e8bd3a" /><path d="M6 9l8-6 1.500 2L9 12z" fill="#d8562a" /></Ic></div>
        <div className="mr-[5px]"><Ic small><path d="M2 15V6l4-3v12M8 15V2h5v13" stroke="#888" strokeWidth="1.200" /><path d="M12 9v6M9 12h6" stroke="#5fa05c" strokeWidth="2" /></Ic></div>
        <div className="mr-[5px]"><Ic small><path d="M1 7q6-6 13 0q-7 6-13 0z" fill="#fff" stroke="#777" strokeWidth="1.200" /><circle cx="7.500" cy="7" r="2.600" fill="#3f6ea5" /><path d="M11 13h5l-2.500 3z" fill="#333" /></Ic></div>
        <div className="mr-[5px]"><Ic small><Funnel /></Ic></div>
        <div className="mr-[4px]"><Ic small><path d="M9 2.500C6 .5 2 2 3 4.500c.5 1 2 1.300 3 1.300-2 0-4 1-3.600 3C3 11.500 7 11.500 9 9.500" stroke="#8b3f8b" strokeWidth="1.500" /><path d="M10 11v4h1M15 11v4h-1" stroke="#555" /></Ic></div>
        <div className="mr-[5px]"><Caret /></div>
        <div className="mr-[5px]"><Ic small><path d="M1 2h5v3H1zM1 6.500h5v3H1zM1 11h5v3H1z" fill="#e5bf3c" stroke="#999" strokeWidth=".8" /><path d="M10.500 15L16 9h-3V1H8v8H5z" fill="#3f6ea5" /></Ic></div>
        <div className="mr-[5px]"><Ic small><path d="M1 2h5v3H1zM1 6.500h5v3H1zM1 11h5v3H1z" fill="#e5bf3c" stroke="#999" strokeWidth=".8" /><path d="M10.500 1L16 7h-3v8H8V7H5z" fill="#3f6ea5" /></Ic></div>
        <Ic small><path d="M1.500 1.500h12v11h-12z" fill="#fff" stroke="#777" strokeWidth="1.200" /><circle cx="12.500" cy="12.500" r="3.200" fill="#d9534a" /><path d="M10.500 12.500h4" stroke="#fff" /></Ic>
      </div>
      <div className="mt-px flex min-h-0 grow flex-col border border-[#c8c8c8] border-b-[#ddd] bg-white">
        <div className="flex h-[10.500px] shrink-0 items-center bg-[#0078d7] pl-[14px] text-white">
          <Check />
          <div className="ml-[4px] h-[9px] w-[9px] shrink-0 border border-dashed border-[#8c6238] bg-[#b57d45]" />
          <span className="pt-px pl-[4px] font-semibold tracking-[0.200px] underline">Reg01012019_WGS84</span>
        </div>
        <div className="flex h-[11px] shrink-0 items-center pl-[3px] font-bold">
          <div className="w-[11px]"><Twist open /></div>
          <Check />
          <svg viewBox="0 0 9 9" className="ml-[4px] h-[9px] w-[9px] shrink-0"><path fill="#dce8f4" d="M0 0h9v9H0z" /><path fill="#1f3550" d="M0 1h3v2H0zM3 3h3v2.500H3zM6 .500h2.500V3H6zM1 6h2.500v2H1z" /><path fill="#7fa3c8" d="M3 0h3v2H3zM6 4h3v2H6zM4 7h2v2H4z" /></svg>
          <span className="pt-[.6px] pl-[4px] tracking-[0.180px]">TCD_2015_020m_eu_03035_d05_E40N20</span>
        </div>
        {legend.map(([v, c]) => (
          <div key={v} className="flex h-[10.800px] shrink-0 items-center pl-[26px]">
            <div className={"h-[10px] w-[9px] shrink-0 " + c} />
            <span className="pt-[.6px] pl-[4px]">{v}</span>
          </div>
        ))}
      </div>
    </div>
  );
}

/* ---------- menu and status bar ---------- */

const menu: [string, string, string, string][] = [
  ["", "P", "rogetto", "w-[36px]"],
  ["", "M", "odifica", "w-[36px]"],
  ["", "V", "isualizza", "w-[39px]"],
  ["", "L", "ayer", "w-[25px]"],
  ["", "I", "mpostazioni", "w-[49px]"],
  ["", "P", "lugins", "w-[32px]"],
  ["Vett", "o", "re", "w-[30px]"],
  ["", "R", "aster", "w-[28px]"],
  ["", "D", "atabase", "w-[37px]"],
  ["", "W", "eb", "w-[23px]"],
  ["", "M", "esh", "w-[26px]"],
  ["Pro", "c", "essing", "w-[42.500px]"],
  ["", "G", "uida", "w-[30px]"],
];

const field = "flex h-[13px] shrink-0 items-center rounded-[1px] border border-[#c6c6c6] bg-white pl-[2px]";

function StatusBar() {
  return (
    <div className="flex h-[17px] shrink-0 items-center bg-[#f0f0f0] pt-[.6px] pl-[2px] text-[6.600px]">
      <div className="flex h-[13px] w-[152px] shrink-0 items-center rounded-[2px] border border-[#bcbcbc] bg-white pl-[4px] text-[#777]">
        <svg viewBox="0 0 8 8" className="mr-[4px] h-[8px] w-[8px]" fill="none" stroke="#666" strokeWidth=".8"><circle cx="3.500" cy="3.500" r="2.300" /><path d="M5.200 5.200L7.500 7.500" /></svg>
        <span className="pt-px">Digita per localizzare (Ctrl+K)</span>
      </div>
      <div className="ml-[467.500px] w-[34.500px] shrink-0 pt-px tracking-[-0.180px] whitespace-nowrap">Coordinata</div>
      <div className={field + " w-[61px] tracking-[-0.050px]"}><span className="pt-px">4307452,1766352</span></div>
      <svg viewBox="0 0 10 10" className="ml-[2px] h-[10px] w-[10px] shrink-0" fill="none" stroke="#333" strokeWidth=".9"><circle cx="3.200" cy="3" r="1.900" /><circle cx="6.700" cy="6.700" r="2" /><path d="M1 7L8.500 1M2 8.500L9 3M1.500 5l5 4.500" /></svg>
      <div className="ml-[8px] w-[17px] shrink-0 pt-px">Scala</div>
      <div className={field + " w-[48px] justify-between"}>
        <span className="pt-px">1:6295004</span>
        <div className="flex h-full w-[10px] items-center justify-center border-l border-[#ccc]"><Caret /></div>
      </div>
      <svg viewBox="0 0 8 10" className="ml-[8px] h-[10px] w-[8px] shrink-0" fill="#666" stroke="#555"><path d="M2 4.500V3a2 2 0 0 1 4 0v1.500" fill="none" strokeWidth="1.100" /><rect x="1" y="4.500" width="6" height="4.500" stroke="none" /></svg>
      <div className="ml-[4px] w-[66px] shrink-0 pt-px tracking-[-0.220px] whitespace-nowrap">Lente d'ingrandimento</div>
      <div className={field + " w-[53px] justify-between"}>
        <span className="pt-px">100%</span>
        <div className="flex h-full w-[9px] items-center justify-center border-l border-[#ccc]"><Steps /></div>
      </div>
      <div className="ml-[5px] w-[34.500px] shrink-0 pt-px">Rotazione</div>
      <div className={field + " w-[50px] justify-between"}>
        <span className="pt-px">0.0 °</span>
        <div className="flex h-full w-[9px] items-center justify-center border-l border-[#ccc]"><Steps /></div>
      </div>
      <div className="ml-[4px]"><Check /></div>
      <div className="ml-[3px] w-[37px] shrink-0 pt-px tracking-[-0.220px]">Visualizza</div>
      <svg viewBox="0 0 10 10" className="h-[9px] w-[9px] shrink-0" fill="#bbb" stroke="#777" strokeWidth=".7"><circle cx="5" cy="5" r="4" /><path d="M1 5h8M5 1v8M2 2.700h6M2 7.300h6M5 1Q1.500 5 5 9Q8.500 5 5 1" fill="none" /></svg>
      <div className="ml-[2px] w-[43.500px] shrink-0 pt-px">EPSG:3035</div>
      <svg viewBox="0 0 10 10" className="h-[10px] w-[10px] shrink-0"><path d="M5 1c2.500 0 4.500 1.400 4.500 3.500S7.500 8 6.500 8l1.200 1.800L4.500 8C2 8 .5 6.600.5 4.500S2.500 1 5 1z" fill="#4a4a4a" /><path d="M2.500 4.500h1M4.500 4.500h1M6.500 4.500h1" stroke="#fff" /></svg>
    </div>
  );
}

export default function App() {
  return (
    <div className="h-[720px] w-[1280px] overflow-hidden bg-white pt-[48px] pl-[64px]">
      <div className="flex h-[624px] w-[1152px] flex-col overflow-hidden bg-[#f0f0f0] font-['Open_Sans','Noto_Sans',sans-serif] text-[6.800px] leading-none tracking-[-0.100px] text-[#1c1c1c]">
        <div className="flex h-[14px] shrink-0 items-center bg-[#0078d7] pl-[1px] text-white">
          <svg viewBox="0 0 10 10" className="mr-[4px] h-[9px] w-[9px]" fill="none"><circle cx="4.700" cy="4.700" r="3.400" stroke="#8fb82e" strokeWidth="1.900" /><path d="M4.500 4.500l4.500 4.500" stroke="#e8c62c" strokeWidth="1.900" /></svg>
          <span className="grow text-[7px]">*Progetto Senza Titolo — QGIS</span>
          <svg viewBox="0 0 70 10" className="mr-[8px] h-[10px] w-[70px]" fill="none" stroke="#fff" strokeWidth=".9"><path d="M5 5.300h5.500M32.500 3.500h4v4h-4zM34 3.500v-1h4V6h-1M60 2.500l5 5M65 2.500l-5 5" /></svg>
        </div>
        <div className="flex h-[12px] shrink-0 items-center border-b border-[#dadada] bg-[#f2f2f2] pt-[1.500px] pl-[6px]">
          {menu.map(([a, u, b, w], i) => (
            <div key={i} className={"shrink-0 " + w}>{a}<span className="underline">{u}</span>{b}</div>
          ))}
        </div>
        <ProjectBar />
        <EditBar />
        <SnapBar />
        <SelectBar />
        <div className="flex min-h-0 grow">
          <div className="flex w-[205px] shrink-0 flex-col">
            <BrowserDock />
            <LayerDock />
          </div>
          <div className="w-[4px] shrink-0 border-r border-[#c9c9c9]" />
          <div className="grow border-t border-r border-[#d3d3d3] bg-white">
            <MapCanvas />
          </div>
        </div>
        <StatusBar />
      </div>
    </div>
  );
}
